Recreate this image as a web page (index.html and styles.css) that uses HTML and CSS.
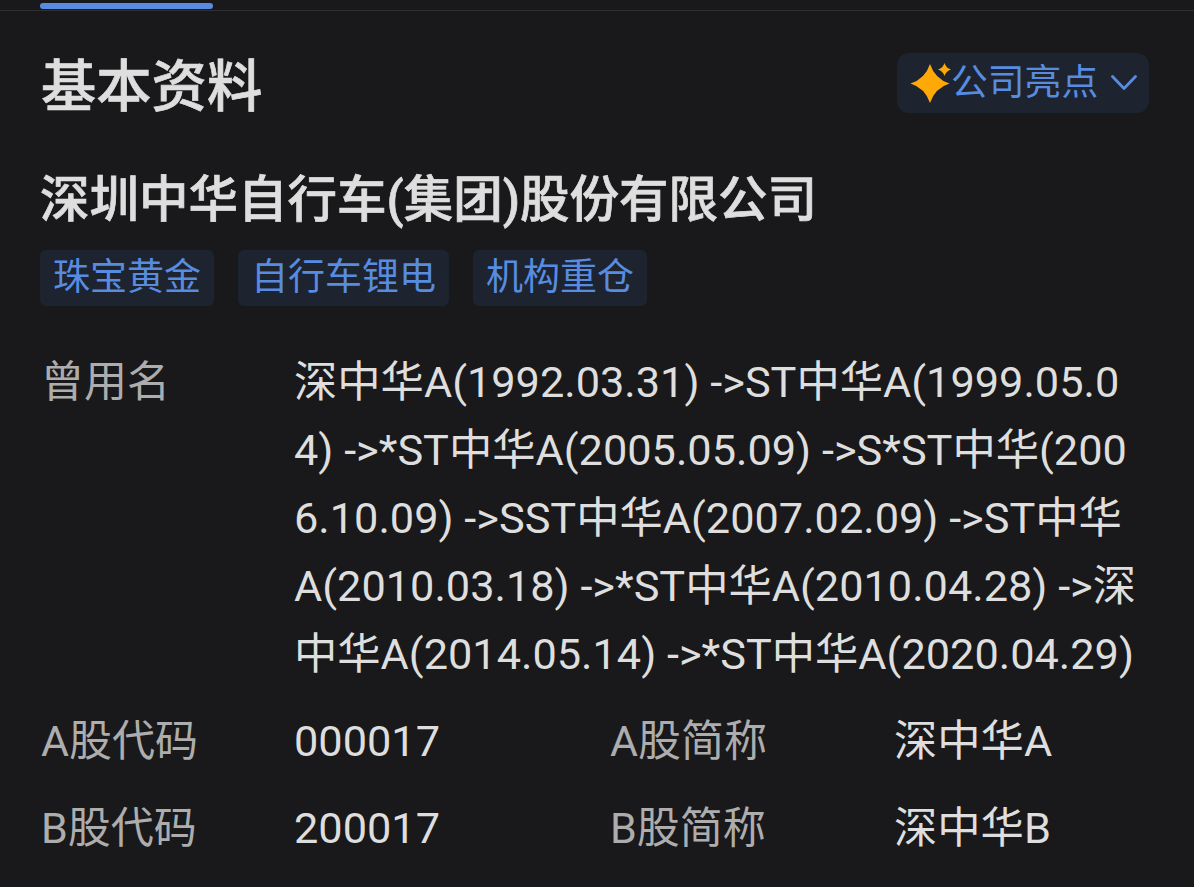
FILE: index.html
```
<!DOCTYPE html>
<html lang="zh-CN">
<head>
    <meta charset="UTF-8">
    <meta name="viewport" content="width=device-width, initial-scale=1.0">
    <title>基本资料</title>
    <link rel="stylesheet" href="styles.css">
</head>
<body>
    <!-- Tab indicator -->
    <nav class="tab-bar">
        <div class="tab-indicator"></div>
    </nav>

    <main>
        <header class="section-header">
            <h1>基本资料</h1>
            <button type="button" class="highlights">
                <svg class="sparkle" width="41" height="42" viewBox="0 0 41 42">
                    <path fill="#ffa80a" d="M20 2 Q25 17 39.500 21.500 Q25 26 20 41 Q15 26 0.500 21.500 Q15 17 20 2Z"/>
                    <path fill="#ffa80a" d="M34.500 1 Q36 6 41 7.500 Q36 9 34.500 14 Q33 9 28 7.500 Q33 6 34.500 1Z"/>
                </svg>
                <span>公司亮点</span>
                <svg class="chevron" width="26" height="16" viewBox="0 0 26 16">
                    <path fill="none" stroke="#578ce0" stroke-width="2.800" stroke-linecap="round" stroke-linejoin="round" d="M1.500 1.500 L13 13.500 L24.500 1.500"/>
                </svg>
            </button>
        </header>

        <h2>深圳中华自行车(集团)股份有限公司</h2>

        <div class="tags">
            <span class="tag">珠宝黄金</span>
            <span class="tag">自行车锂电</span>
            <span class="tag">机构重仓</span>
        </div>

        <!-- Company details -->
        <dl class="details">
            <dt>曾用名</dt>
            <dd class="history">
                深中华A(1992.03.31) -&gt;ST中华A(1999.05.0<br>4) -&gt;*ST中华A(2005.05.09) -&gt;S*ST中华(200<br>6.10.09) -&gt;SST中华A(2007.02.09) -&gt;ST中华<br>A(2010.03.18) -&gt;*ST中华A(2010.04.28) -&gt;深<br>中华A(2014.05.14) -&gt;*ST中华A(2020.04.29)
            </dd>
            <dt>A股代码</dt>
            <dd>000017</dd>
            <dt>A股简称</dt>
            <dd>深中华A</dd>
            <dt>B股代码</dt>
            <dd>200017</dd>
            <dt>B股简称</dt>
            <dd>深中华B</dd>
        </dl>
    </main>
</body>
</html>
```
FILE: styles.css
```
* {
    box-sizing: border-box;
}

body {
    margin: 0;
    background-color: #19191b;
    color: #dedede;
    font-family: Roboto, "Noto Sans CJK SC", sans-serif;
    overflow: hidden;
}

.tab-bar {
    height: 11px;
    padding: 3px 40px 0;
    border-bottom: 1px solid #303032;
}

.tab-indicator {
    width: 173px;
    height: 6px;
    border-radius: 3px;
    background-color: #578ce0;
}

main {
    padding: 42px 40px 0;
}

.section-header {
    display: flex;
    justify-content: space-between;
    height: 60px;
    margin-right: 5px;
}

h1, h2 {
    font-weight: 500;
    -webkit-text-stroke: 0.7px #dedede;
}

h1 {
    margin: 0;
    padding-left: 1px;
    font-size: 55.3px;
    line-height: 69px;
}

.highlights {
    display: flex;
    align-items: center;
    width: 252px;
    height: 60px;
    padding: 0 12px 0 13px;
    border: none;
    border-radius: 12px;
    background-color: #1d232f;
    color: #578ce0;
    font-family: inherit;
    font-size: 36.8px;
    line-height: 60px;
}

.highlights span {
    height: 60px;
}

.chevron {
    margin-left: auto;
}

h2 {
    margin: 52px 0 0;
    font-size: 49.5px;
    line-height: 70px;
    white-space: nowrap;
}

.tags {
    display: flex;
    gap: 24px;
    margin-top: 15px;
}

.tag {
    height: 56px;
    padding: 0 13px;
    border-radius: 6px;
    background-color: #1d232f;
    color: #578ce0;
    font-size: 37px;
    line-height: 55px;
}

.details {
    display: grid;
    grid-template-columns: 253px 316px 284px 1fr;
    row-gap: 19px;
    margin: 43px 0 0 1px;
    font-size: 43.3px;
    line-height: 68px;
    white-space: nowrap;
}

dt {
    color: #adadad;
    font-size: 43px;
    line-height: 67px;
}

dd {
    margin: 0;
}

.history {
    grid-column: 2 / -1;
}
```
